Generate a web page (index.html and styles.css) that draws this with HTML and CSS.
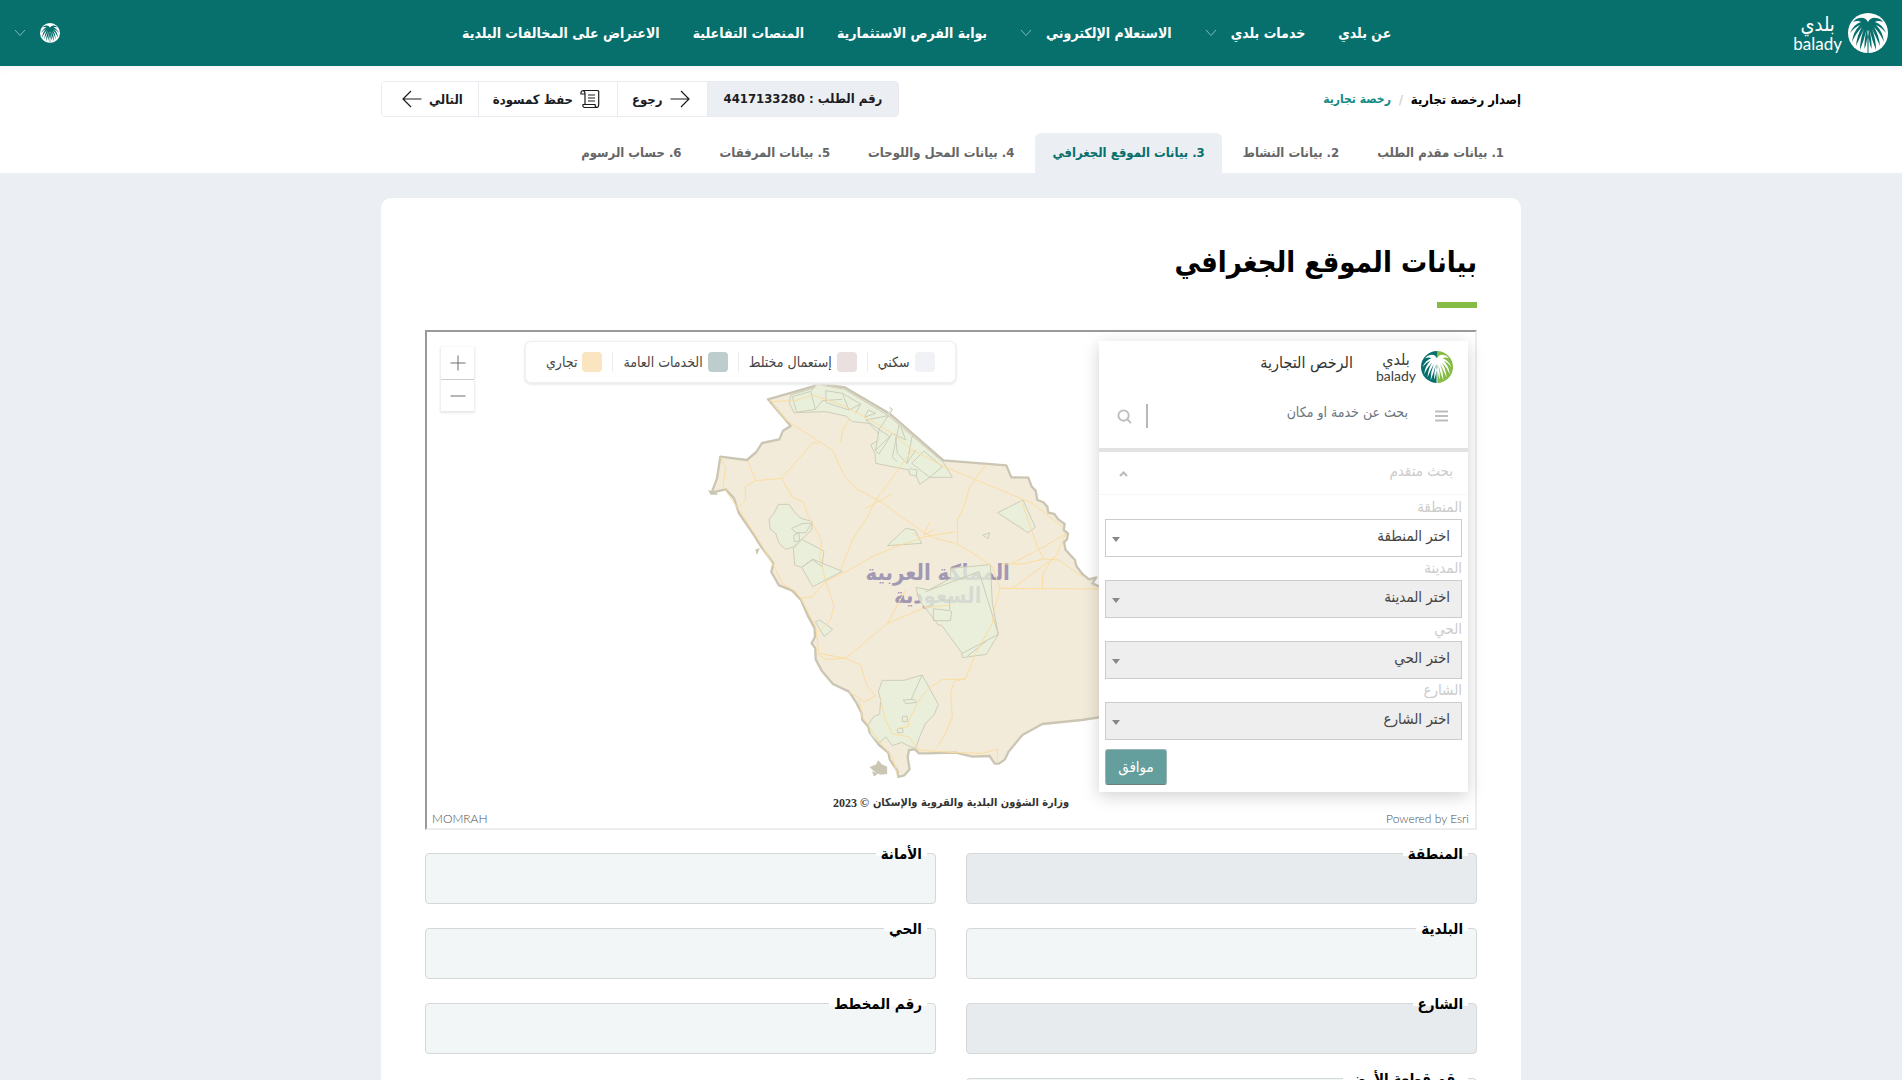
FILE: index.html
```html
<!DOCTYPE html>
<html lang="ar" dir="rtl">
<head>
<meta charset="utf-8">
<meta name="viewport" content="width=device-width, initial-scale=1">
<title>بيانات الموقع الجغرافي</title>
<link rel="stylesheet" href="styles.css">
</head>
<body>
<svg class="sprite" aria-hidden="true">
  <symbol id="palm" viewBox="0 0 40 40">
    <path d="M19.500 40L19.300 20Q20 14 20.700 20L20.500 40ZM20 9Q17 4 12 5Q8 5 5 9Q10 7 13 9Q6 11 2 20Q7 14 12 12Q5 19 4 29Q8 20 14 14Q9 22 8 33Q12 24 16 16Q12 26 12 37Q16 27 18.500 17Q16 28 16.500 36Q19 30 20 18Q21 30 23.500 36Q24 28 21.500 17Q24 27 28 37Q28 26 24 16Q28 24 32 33Q31 22 26 14Q32 20 36 29Q35 19 28 12Q33 14 38 20Q34 11 27 9Q30 7 35 9Q32 5 28 5Q23 4 20 9Z"/>
  </symbol>
  <symbol id="chev" viewBox="0 0 12 8"><path d="M1 1L6 6.500L11 1" fill="none" stroke="currentColor"/></symbol>
  <symbol id="arrow" viewBox="0 0 20 20"><path d="M0.500 10H19M11 2L19 10L11 18" fill="none" stroke="currentColor" stroke-width="1.200"/></symbol>
</svg>

<header class="topbar">
  <a class="brand" href="#">
    <svg class="brand-mark" viewBox="0 0 40 40" aria-hidden="true"><circle cx="20" cy="20" r="20" fill="#fff"/><use href="#palm" fill="#07706d"/></svg>
    <span class="brand-text"><span class="brand-ar">بلدي</span><span class="brand-en">balady</span></span>
  </a>
  <nav class="nav">
    <a href="#">عن بلدي</a>
    <a href="#">خدمات بلدي <svg class="chev"><use href="#chev"/></svg></a>
    <a href="#">الاستعلام الإلكتروني <svg class="chev"><use href="#chev"/></svg></a>
    <a href="#">بوابة الفرص الاستثمارية</a>
    <a href="#">المنصات التفاعلية</a>
    <a href="#">الاعتراض على المخالفات البلدية</a>
  </nav>
  <button class="user" type="button" aria-label="الحساب">
    <svg class="user-mark" viewBox="0 0 40 40"><circle cx="20" cy="20" r="20" fill="#fff"/><use href="#palm" fill="#07706d"/></svg>
    <svg class="chev"><use href="#chev"/></svg>
  </button>
</header>

<div class="subhead">
  <div class="container">
    <div class="subhead-row">
      <div class="crumbs"><span class="crumb-title">إصدار رخصة تجارية</span><span class="slash">/</span><a href="#">رخصة تجارية</a></div>
      <div class="toolbar">
        <span class="req">رقم الطلب : 4417133280</span>
        <button type="button"><svg class="ico"><use href="#arrow"/></svg>رجوع</button>
        <button type="button"><svg class="ico" viewBox="0 0 20 20" fill="none" stroke="currentColor" stroke-width="1.200"><path d="M3 1.500H17.500Q19 1.500 18.700 4V15Q18.700 18.500 17 18.500H5Q2.500 18.500 3 15.500H15Q15 18.500 17 18.500M3 1.500Q0.500 2 1 5H5V15.500M3 1.500Q5 2 5 5M8 6H15M8 9H15M8 12H15"/></svg>حفظ كمسودة</button>
        <button type="button">التالي<svg class="ico flip"><use href="#arrow"/></svg></button>
      </div>
    </div>
    <nav class="tabs">
      <a href="#">1. بيانات مقدم الطلب</a>
      <a href="#">2. بيانات النشاط</a>
      <a class="active" href="#">3. بيانات الموقع الجغرافي</a>
      <a href="#">4. بيانات المحل واللوحات</a>
      <a href="#">5. بيانات المرفقات</a>
      <a href="#">6. حساب الرسوم</a>
    </nav>
  </div>
</div>

<main class="page">
  <section class="container card">
    <h1>بيانات الموقع الجغرافي</h1>
    <div class="map">
      <svg class="map-art" viewBox="-756 -114 3144 1488" role="img" aria-label="خريطة المملكة">
        <path class="land" d="M267 88L400 50L415 39L497 52L632 131L793 271L982 286L997 322L1048 323L1058 350L1070 362L1075 390L1092 396L1105 410L1108 428L1126 432L1138 448L1157 462L1154 480L1167 490L1164 508L1155 517L1160 540L1188 570L1192 588L1210 612L1230 628L1252 622L1240 640L1262 650L1300 700L1300 1036L1208 1050L1090 1062L1030 1095L988 1146L978 1168L960 1181L947 1181L932 1158L880 1160L830 1148L745 1150L720 1150L708 1138L690 1140L686 1162L692 1198L676 1216L658 1221L655 1203L632 1168L628 1148L600 1125L572 1088L568 1070L550 1050L548 1030L532 998L510 965L462 942L428 902L410 868L409 835L398 820L408 800L407 775L388 740L366 690L340 662L300 646L277 606L283 580L243 525L225 495L180 430L165 385L140 358L98 368L114 325L124 260L204 270L232 246L249 219L301 208L312 182L335 168Z"/>
        <g class="country" text-anchor="middle"><text x="776" y="630">المملكة العربية</text><text x="776" y="698">السعودية</text></g>
        <g class="park">
          <path d="M335 75L400 55L415 43L497 58L628 137L793 277L820 322L752 322L722 343L712 318L692 314L690 300L590 280L588 250L575 225L600 210L598 190L570 160L520 155L500 138L440 125L345 128L331 100Z"/>
          <path d="M340 80L395 64L409 118L353 127ZM395 64L415 43M440 62L490 70L545 102L510 120L442 98ZM545 102L530 130M490 70L510 120M568 120L556 142L590 130ZM628 137L600 178L560 150ZM600 178L590 240L632 200ZM640 190L600 252L588 240M660 165L640 262L655 275M700 195L684 280L655 250L650 200M710 240L684 280M735 243L790 290L752 322L698 280ZM692 296L714 300L712 318M632 112L641 118L626 142M665 170L680 210L640 190M409 118L430 92L490 88"/>
          <path d="M298 403H330L345 425L366 445L400 455L398 480L368 508L345 530L320 538L300 520L290 490L274 478L270 448L285 430ZM338 475L372 460H398L380 488H350ZM344 495L360 490L362 512L346 515Z"/>
          <path d="M368 508L435 543L428 590L400 568L368 592L347 585L343 535ZM368 592L402 568L490 604L401 650Z"/>
          <path d="M625 527L680 475L708 480L728 520ZM1032 390L1069 472L1047 488L956 428ZM911 496L931 488L928 506ZM409 756L422 750L461 778L436 799Z"/>
          <path d="M711 652L750 660L815 625V595L934 584L940 700L958 793L922 853L850 863L848 848L788 766L778 765L763 745L720 690ZM740 665L900 605L958 793L850 850M763 716L812 722L818 725L814 752H763ZM866 858L920 815M785 690H812V720"/>
          <path d="M610 931H675L729 915L748 948L778 1004L766 1033L740 1060L722 1100L710 1136L694 1130L668 1117L640 1127L620 1100L600 1120L575 1095L568 1063L584 1040L602 1032L605 990L598 965ZM729 915L697 987M673 990L705 988L713 997L680 1001ZM670 1039H685V1055H670ZM655 1076H672V1088H655Z"/>
        </g>
        <path class="road" d="M270 95L350 92L400 75L497 108L560 142L640 190L700 240L800 292L1060 400L1150 470M280 100L320 150L425 217L460 240L495 315L530 355L600 392L730 485L770 505L830 520L890 555L940 590L963 655L945 720L940 760L890 850L860 925L825 935L815 970L820 1040L800 1090L775 1130V1135M425 217L400 220L308 325L230 332L208 275M308 325L340 382L372 395L388 440L428 510L422 560L440 634L510 600L580 560L650 530L740 500M700 240L590 392L560 450L520 510L485 600M180 410L200 390L198 350L230 332M485 218L490 185L510 148M922 282L872 350L855 410L835 450L836 520M740 500L830 485M124 262L140 290L132 350L180 420L245 520L285 590L310 640L350 665L365 685L400 680L440 634L465 705L455 750L418 785M680 660L625 760L500 865M815 705L740 712L625 760M365 685L410 770L420 850L500 865L545 885L562 945L590 978L555 995L510 965M500 865L440 868L412 850M1160 490L1130 560L1000 655L963 655L1260 657M1030 400L1075 530L1095 567L1030 582H970M1160 492L1095 530L1000 580M1095 567L1140 570L1210 620M1090 655L1092 610L1125 560M540 990L550 1040L605 1120L640 1160L655 1215M605 990L620 1050L640 1092L690 1100L718 1140L830 1148L910 1150L955 1138V1175M750 955L720 990L690 1050L688 1070L655 1075M750 955L790 928H860M750 460L735 495L765 480M725 505L700 490M560 415L640 372"/>
        <path class="isle" d="M598 1175L606 1184L622 1192V1210L605 1212L590 1205L576 1192L592 1186ZM583 1208L592 1212L586 1216ZM232 540L238 538L234 548ZM92 364L115 372H96Z"/>
      </svg>
      <div class="zoom"><button type="button" aria-label="تكبير"><svg viewBox="0 0 16 16"><path d="M0.500 8H15.500M8 0.500V15.500"/></svg></button><button type="button" aria-label="تصغير"><svg viewBox="0 0 16 16"><path d="M0.500 8H15.500"/></svg></button></div>
      <ul class="legend">
        <li><i class="sw home"></i>سكني</li>
        <li><i class="sw mixed"></i>إستعمال مختلط</li>
        <li><i class="sw public"></i>الخدمات العامة</li>
        <li><i class="sw trade"></i>تجاري</li>
      </ul>
      <div class="panel">
        <div class="panel-head">
          <div class="panel-title">
            <svg class="panel-mark" viewBox="0 0 40 40" aria-hidden="true"><path d="M20 0A20 20 0 0 0 20 40Z" fill="#07706d"/><path d="M20 0A20 20 0 0 1 20 40Z" fill="#86bc45"/><use href="#palm" fill="#fff"/></svg>
            <span class="brand-text dark"><span class="brand-ar">بلدي</span><span class="brand-en">balady</span></span>
            <span class="panel-name">الرخص التجارية</span>
          </div>
          <div class="search">
            <svg class="burger" viewBox="0 0 13 12" aria-hidden="true"><path d="M0 1.500H13M0 6H13M0 10.500H13"/></svg>
            <input type="text" aria-label="بحث" placeholder="بحث عن خدمة او مكان">
            <span class="bar"></span>
            <svg class="lens" viewBox="0 0 16 16" aria-hidden="true"><circle cx="7" cy="7" r="5.500"/><path d="M11 11L15 15"/></svg>
          </div>
        </div>
        <form class="panel-body">
          <div class="adv"><span>بحث متقدم</span><svg class="chev up" viewBox="0 0 9 6"><path d="M1 5L4.500 1.500L8 5"/></svg></div>
          <div class="picks">
            <label for="s1">المنطقة</label><div class="pick"><select id="s1"><option>اختر المنطقة</option></select></div>
            <label for="s2">المدينة</label><div class="pick"><select id="s2" disabled><option>اختر المدينة</option></select></div>
            <label for="s3">الحي</label><div class="pick"><select id="s3" disabled><option>اختر الحي</option></select></div>
            <label for="s4">الشارع</label><div class="pick"><select id="s4" disabled><option>اختر الشارع</option></select></div>
            <button class="ok" type="button">موافق</button>
          </div>
        </form>
      </div>
      <p class="owner">وزارة الشؤون البلدية والقروية والإسكان <span class="year">© 2023</span></p>
      <div class="credits"><span>Powered by Esri</span><span>MOMRAH</span></div>
    </div>

    <form class="fields">
      <div class="field"><label for="f1">المنطقة</label><input id="f1" type="text" disabled></div>
      <div class="field"><label for="f2">الأمانة</label><input id="f2" type="text" readonly></div>
      <div class="field"><label for="f3">البلدية</label><input id="f3" type="text" readonly></div>
      <div class="field"><label for="f4">الحي</label><input id="f4" type="text" readonly></div>
      <div class="field"><label for="f5">الشارع</label><input id="f5" type="text" disabled></div>
      <div class="field"><label for="f6">رقم المخطط</label><input id="f6" type="text" readonly></div>
      <div class="field"><label for="f7">رقم قطعة الأرض</label><input id="f7" type="text" readonly></div>
    </form>
  </section>
</main>
</body>
</html>
```
FILE: styles.css
```css
* { box-sizing: border-box; }

html, body { height: 100%; }

body {
  margin: 0;
  display: flex;
  flex-direction: column;
  background: #ebeef3;
  color: #000;
  font-family: "DejaVu Sans Condensed", "DejaVu Sans", sans-serif;
  font-size: 13px;
}

a { color: inherit; text-decoration: none; }

button, input, select { font: inherit; color: inherit; }

button { cursor: pointer; }

.sprite { display: none; }

.container {
  width: 100%;
  max-width: 1140px;
  margin: 0 auto;
}

/* Top bar */
.topbar {
  flex: none;
  display: flex;
  align-items: center;
  justify-content: space-between;
  height: 66px;
  padding: 0 14px;
  background: #07706d;
  color: #fff;
}

.brand { display: flex; align-items: center; gap: 6px; }

.brand-mark { width: 40px; height: 40px; }

.brand-text {
  display: flex;
  flex-direction: column;
  align-items: center;
}

.brand-ar { font-size: 20px; line-height: 22px; }

.brand-en {
  font-family: Lato, "Open Sans", sans-serif;
  font-size: 17px;
  line-height: 18px;
}

.nav { display: flex; gap: 33px; font-weight: bold; font-size: 14px; }

.nav a { display: flex; align-items: center; gap: 14px; white-space: nowrap; }

.chev { width: 12px; height: 8px; opacity: 0.5; }

.user {
  display: flex;
  align-items: center;
  gap: 14px;
  padding: 0;
  border: 0;
  background: none;
}

.user-mark { width: 20px; height: 20px; }

/* Request bar and steps */
.subhead {
  flex: none;
  padding-top: 15px;
  background: #fff;
  box-shadow: inset 0 8px 8px -6px #f4f4f4;
}

.subhead-row {
  display: flex;
  justify-content: space-between;
  align-items: center;
}

.crumbs { display: flex; align-items: center; gap: 8px; font-weight: bold; font-size: 13px; }

.crumbs a { color: #148a85; font-size: 12px; }

.slash { color: #c4c4c4; font-weight: normal; }

.toolbar {
  display: flex;
  height: 36px;
  border: 1px solid #e9ebf0;
  border-radius: 4px;
  overflow: hidden;
  font-size: 13px;
  font-weight: bold;
  color: #1c1c22;
}

.req { padding: 0 16px; background: #ebeef3; line-height: 34px; }

.toolbar button {
  display: flex;
  align-items: center;
  gap: 7px;
  padding: 0 17px 0 14px;
  border: 0;
  border-right: 1px solid #e9ebf0;
  background: #fff;
}

.toolbar button:last-child { padding: 0 15px 0 20px; }

.ico { width: 20px; height: 20px; }

.flip { transform: scaleX(-1); }

.tabs {
  display: flex;
  gap: 4px;
  margin-top: 16px;
  font-size: 13px;
  font-weight: bold;
  color: #666;
}

.tabs a {
  height: 40px;
  padding: 0 17px;
  line-height: 40px;
  white-space: nowrap;
}

.tabs .active {
  background: #ebeef3;
  border-radius: 6px 6px 0 0;
  color: #07706d;
}

/* Card */
.page {
  flex: 1;
  min-height: 0;
  overflow-y: auto;
  scrollbar-width: none;
  padding-top: 25px;
}

.card {
  padding: 44px 44px 60px;
  background: #fff;
  border-radius: 10px;
}

h1 { margin: 0; font-size: 29px; line-height: 40px; }

h1::after {
  content: "";
  display: block;
  width: 40px;
  height: 6px;
  margin: 20px 0 22px;
  background: #86bc45;
}

/* Map */
.map {
  position: relative;
  height: 500px;
  border: 2px solid #ededed;
  border-top-color: #9a9a9a;
  border-left-color: #9a9a9a;
}

.map-art { display: block; width: 100%; height: 100%; }

.land { fill: #f3ebd9; stroke: #cbc6b4; stroke-width: 7; stroke-linejoin: round; }

.park { fill: #e7f0dc; fill-opacity: 0.75; stroke: #cdcdb8; stroke-width: 3; }

.road { fill: none; stroke: #fbdda0; stroke-width: 3; stroke-linejoin: round; }

.isle { fill: #cbc6b4; stroke: #cbc6b4; stroke-width: 5; }

.country { fill: #a198b3; font-size: 66px; font-weight: bold; }

.zoom {
  position: absolute;
  left: 14px;
  top: 15px;
  display: flex;
  flex-direction: column;
  width: 33px;
  background: #fff;
  box-shadow: 0 1px 2px 1px #e8e8e8;
}

.zoom button {
  display: grid;
  place-items: center;
  height: 32px;
  padding: 0;
  border: 0;
  background: none;
}

.zoom button + button { border-top: 1px solid #ccc; }

.zoom svg { width: 16px; height: 16px; stroke: #6e6e6e; }

.legend {
  position: absolute;
  left: 98px;
  top: 9px;
  display: flex;
  align-items: center;
  height: 42px;
  margin: 0;
  padding: 0 10px;
  list-style: none;
  background: #fff;
  border: 1px solid #f0f0f0;
  border-radius: 6px;
  box-shadow: 0 1px 2px 1px #ededed;
  color: #444;
  font-size: 14px;
}

.legend li { display: flex; align-items: center; gap: 5px; padding: 0 10px; line-height: 20px; white-space: nowrap; }

.legend li + li { border-right: 1px solid #ececec; }

.sw { width: 20px; height: 20px; border-radius: 4px; }

.home { background: #f1f2f5; }
.mixed { background: #ebe0e0; }
.public { background: #bdcccc; }
.trade { background: #fbe4c0; }

.panel {
  position: absolute;
  right: 7px;
  top: 9px;
  width: 369px;
  box-shadow: 0 4px 16px rgba(0, 0, 0, 0.18);
  background: #e2e2e2;
}

.panel-head { height: 107px; padding: 10px 15px 0 10px; background: #fff; }

.panel-title { display: flex; align-items: center; gap: 5px; height: 32px; }

.panel-mark { width: 32px; height: 32px; }

.dark { color: #3d3d3d; }

.dark .brand-ar { font-size: 16px; line-height: 17px; }

.dark .brand-en { font-size: 14px; line-height: 15px; }

.panel-name { margin-right: 18px; padding-bottom: 10px; color: #333; font-size: 16px; }

.search { display: flex; align-items: center; height: 40px; margin-top: 13px; padding: 0 5px 0 8px; }

.burger { width: 13px; height: 12px; stroke: #bdbdbd; stroke-width: 2; }

.search input {
  flex: 1;
  min-width: 0;
  margin-right: 27px;
  padding: 0 0 8px;
  border: 0;
  background: none;
  font-size: 14px;
}

.search input::placeholder { color: #6c757d; opacity: 1; }

.bar { width: 2px; height: 24px; background: #b8b8b8; }

.lens { width: 15px; height: 15px; margin-right: 14px; fill: none; stroke: #bdbdbd; stroke-width: 2; }

.panel-body { margin-top: 4px; background: #fff; color: #ccc; }

.adv {
  display: flex;
  align-items: center;
  justify-content: space-between;
  height: 43px;
  padding: 0 15px 4px 20px;
  border-bottom: 1px solid #f7f7f7;
  font-size: 15px;
}

.up { width: 9px; height: 6px; margin-top: 6px; fill: none; stroke: #777; stroke-width: 2; }

.picks { display: flex; flex-direction: column; padding: 1px 6px 7px; }

.picks label { height: 23px; line-height: 22px; font-size: 15px; }

.pick { position: relative; height: 38px; }

.pick::after {
  content: "";
  position: absolute;
  left: 7px;
  top: 18px;
  border: 4px solid transparent;
  border-top: 5px solid #888;
  border-bottom: 0;
}

.pick select {
  width: 100%;
  height: 38px;
  padding: 0 11px 4px;
  appearance: none;
  border: 1px solid #ccc;
  border-radius: 0;
  background: #fff;
  color: #444;
  font-size: 15px;
  opacity: 1;
}

.pick select:disabled { background: #eee; }

.ok {
  align-self: flex-end;
  height: 36px;
  width: 62px;
  margin-top: 9px;
  padding: 0;
  border: 1px solid #9ab5b4;
  border-bottom-color: #6d7f7e;
  border-radius: 3px;
  background: #659f9d;
  color: #fff;
  font-size: 15px;
}

.owner {
  position: absolute;
  left: 408px;
  bottom: 16px;
  width: 232px;
  margin: 0;
  display: flex;
  justify-content: center;
  gap: 4px;
  white-space: nowrap;
  color: #333;
  font-size: 11px;
  line-height: 18px;
  font-weight: bold;
}

.year { font-family: "Liberation Serif", serif; font-size: 12px; }

.credits {
  position: absolute;
  left: 5px;
  right: 6px;
  bottom: 0;
  display: flex;
  justify-content: space-between;
  color: #4c4c4c;
  font-family: Lato, "Open Sans", sans-serif;
  font-size: 12px;
  font-weight: 300;
  line-height: 18px;
}

/* Form */
.fields {
  display: grid;
  grid-template-columns: 1fr 1fr;
  gap: 24px 30px;
  margin-top: 23px;
}

.field { position: relative; height: 51px; }

.field label {
  position: absolute;
  right: 9px;
  top: -8px;
  padding: 0 5px;
  background: linear-gradient(#fff 11px, transparent 11px);
  font-size: 15px;
  line-height: 18px;
  font-weight: bold;
}

.field input {
  width: 100%;
  height: 100%;
  border: 1px solid #d5d8d9;
  border-radius: 4px;
  background: #f2f6f7;
}

.field input:disabled { background: #e8ebee; }
```
